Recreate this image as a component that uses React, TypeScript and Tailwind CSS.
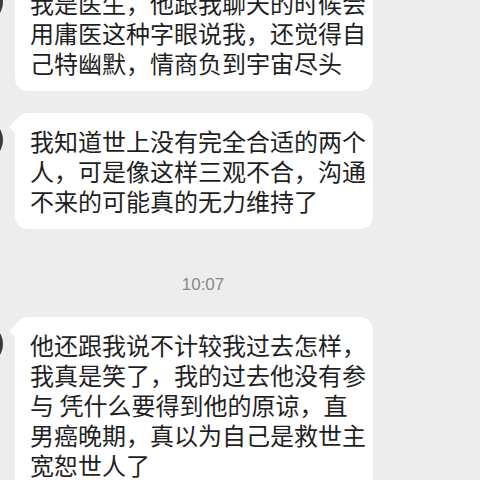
const messages: string[][] = [
  [
    "我是医生，他跟我聊天的时候会",
    "用庸医这种字眼说我，还觉得自",
    "己特幽默，情商负到宇宙尽头",
  ],
  [
    "我知道世上没有完全合适的两个",
    "人，可是像这样三观不合，沟通",
    "不来的可能真的无力维持了",
  ],
];

const last = [
  "他还跟我说不计较我过去怎样，",
  "我真是笑了，我的过去他没有参",
  "与 凭什么要得到他的原谅，直",
  "男癌晚期，真以为自己是救世主",
  "宽恕世人了",
];

const Bubble = ({ lines, className = "" }: { lines: string[]; className?: string }) => (
  <div className={`flex items-start ${className}`}>
    <div className="ml-[-39px] mt-[6px] mr-[12px] h-[42px] w-[42px] shrink-0 rounded-full bg-[#3a3a3a]" />
    <div className="relative w-[358px] rounded-[13px] bg-white pl-[15px] pr-[7px] py-[13px] text-[24px] leading-[30px] text-[#1f1f1f]">
      <div className="absolute left-[-6px] top-[7px] h-0 w-0 border-y-[7px] border-r-[7px] border-y-transparent border-r-white" />
      {lines.map((l) => (
        <div key={l} className="whitespace-pre">
          {l}
        </div>
      ))}
    </div>
  </div>
);

export default function App() {
  return (
    <div
      className="h-[480px] w-[480px] overflow-hidden bg-[#ededed]"
      style={{ fontFamily: '"Noto Sans CJK SC", "Noto Sans", sans-serif' }}
    >
      <div className="flex flex-col">
        <Bubble lines={messages[0]} className="mt-[-25px]" />
        <Bubble lines={messages[1]} className="mt-[22px]" />
        <div className="mt-[46px] mb-[22px] flex w-[406px] justify-center">
          <span className="text-[17px] leading-[20px] text-[#8a8a8a]" style={{ fontFamily: '"Liberation Sans", sans-serif' }}>
            10:07
          </span>
        </div>
        <Bubble lines={last} />
      </div>
    </div>
  );
}
